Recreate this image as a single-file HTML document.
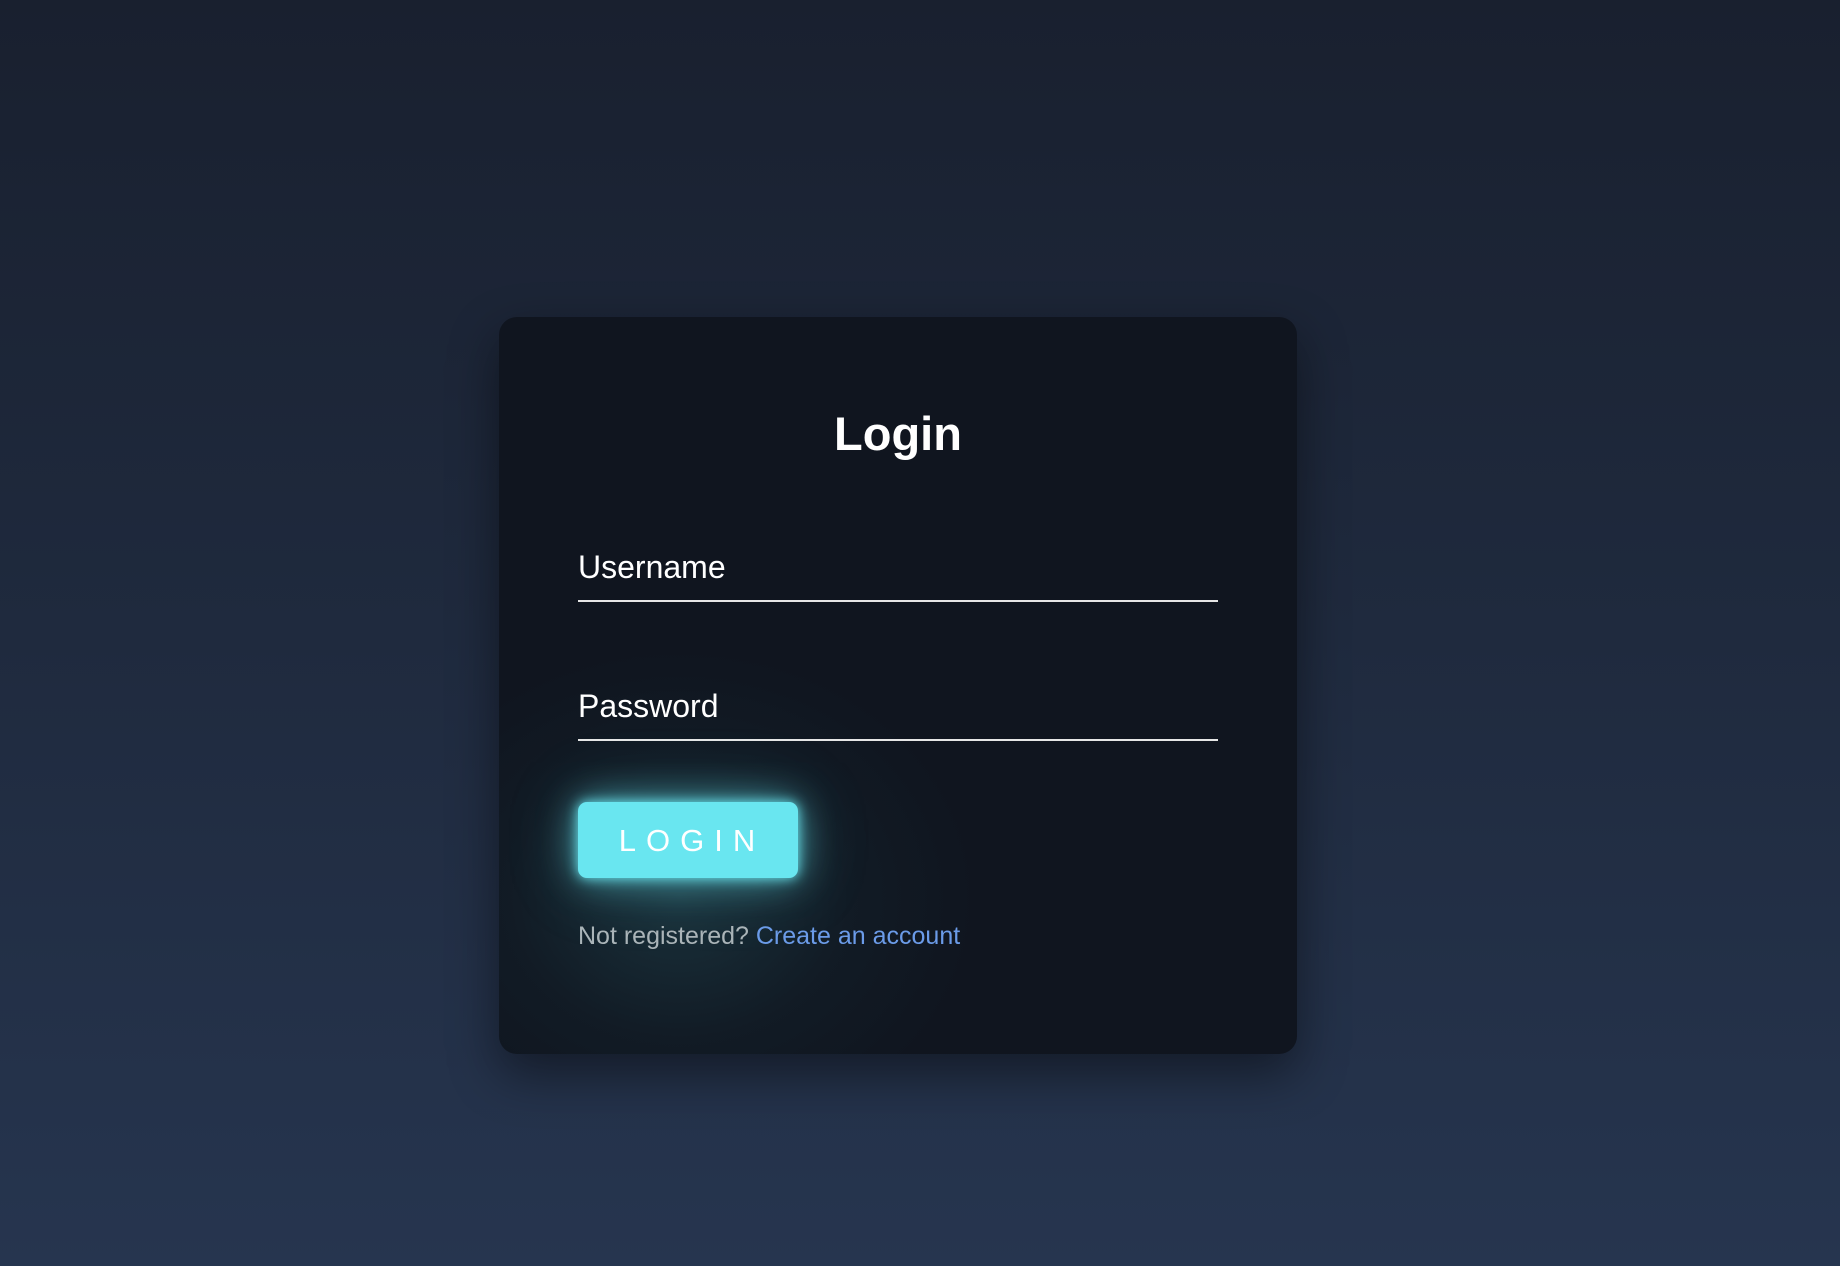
<!DOCTYPE html>
<html><head><meta charset="utf-8"><style>
html,body{margin:0;padding:0}
body{width:1840px;height:1266px;overflow:hidden;background:linear-gradient(180deg,#19202f 0%,#1f2a3e 50%,#26354f 100%);font-family:"Liberation Sans",sans-serif;position:relative}
.card{position:absolute;left:499px;top:317px;width:798px;height:737px;background:#10151f;border-radius:18px;box-shadow:0 20px 50px rgba(0,0,0,0.45)}
.glow{position:absolute;left:499px;top:317px;width:798px;height:737px;border-radius:18px;overflow:hidden}
.glow div{position:absolute;left:-120px;top:330px;width:600px;height:500px;background:radial-gradient(ellipse at center,rgba(60,150,160,0.22) 0%,rgba(30,80,90,0.1) 40%,rgba(0,0,0,0) 70%)}
.t{position:absolute;color:#fff;white-space:nowrap}
.title{left:0;width:1796px;text-align:center;top:406px;font-size:47px;font-weight:bold}
.lab{left:578px;font-size:32px}
.line{position:absolute;left:578px;width:640px;height:2px;background:#e6e6e6}
.btn{position:absolute;left:578px;top:802px;width:220px;height:76px;border-radius:9px;background:#69e6f0;box-shadow:0 0 12px rgba(105,230,240,1),0 0 36px rgba(105,230,240,0.6),0 0 70px rgba(105,230,240,0.25);color:#fff;font-size:31px;letter-spacing:10px;text-align:center;line-height:78px;text-indent:8px}
.hint{left:578px;top:922px;font-size:25px;color:#aab4b8}
.hint span{color:#6b9be8}
</style></head><body>
<div class="card"></div>
<div class="glow"><div></div></div>
<div class="t title">Login</div>
<div class="t lab" style="top:549px">Username</div>
<div class="line" style="top:600px"></div>
<div class="t lab" style="top:688px">Password</div>
<div class="line" style="top:739px"></div>
<div class="btn">LOGIN</div>
<div class="t hint">Not registered? <span>Create an account</span></div>
</body></html>
